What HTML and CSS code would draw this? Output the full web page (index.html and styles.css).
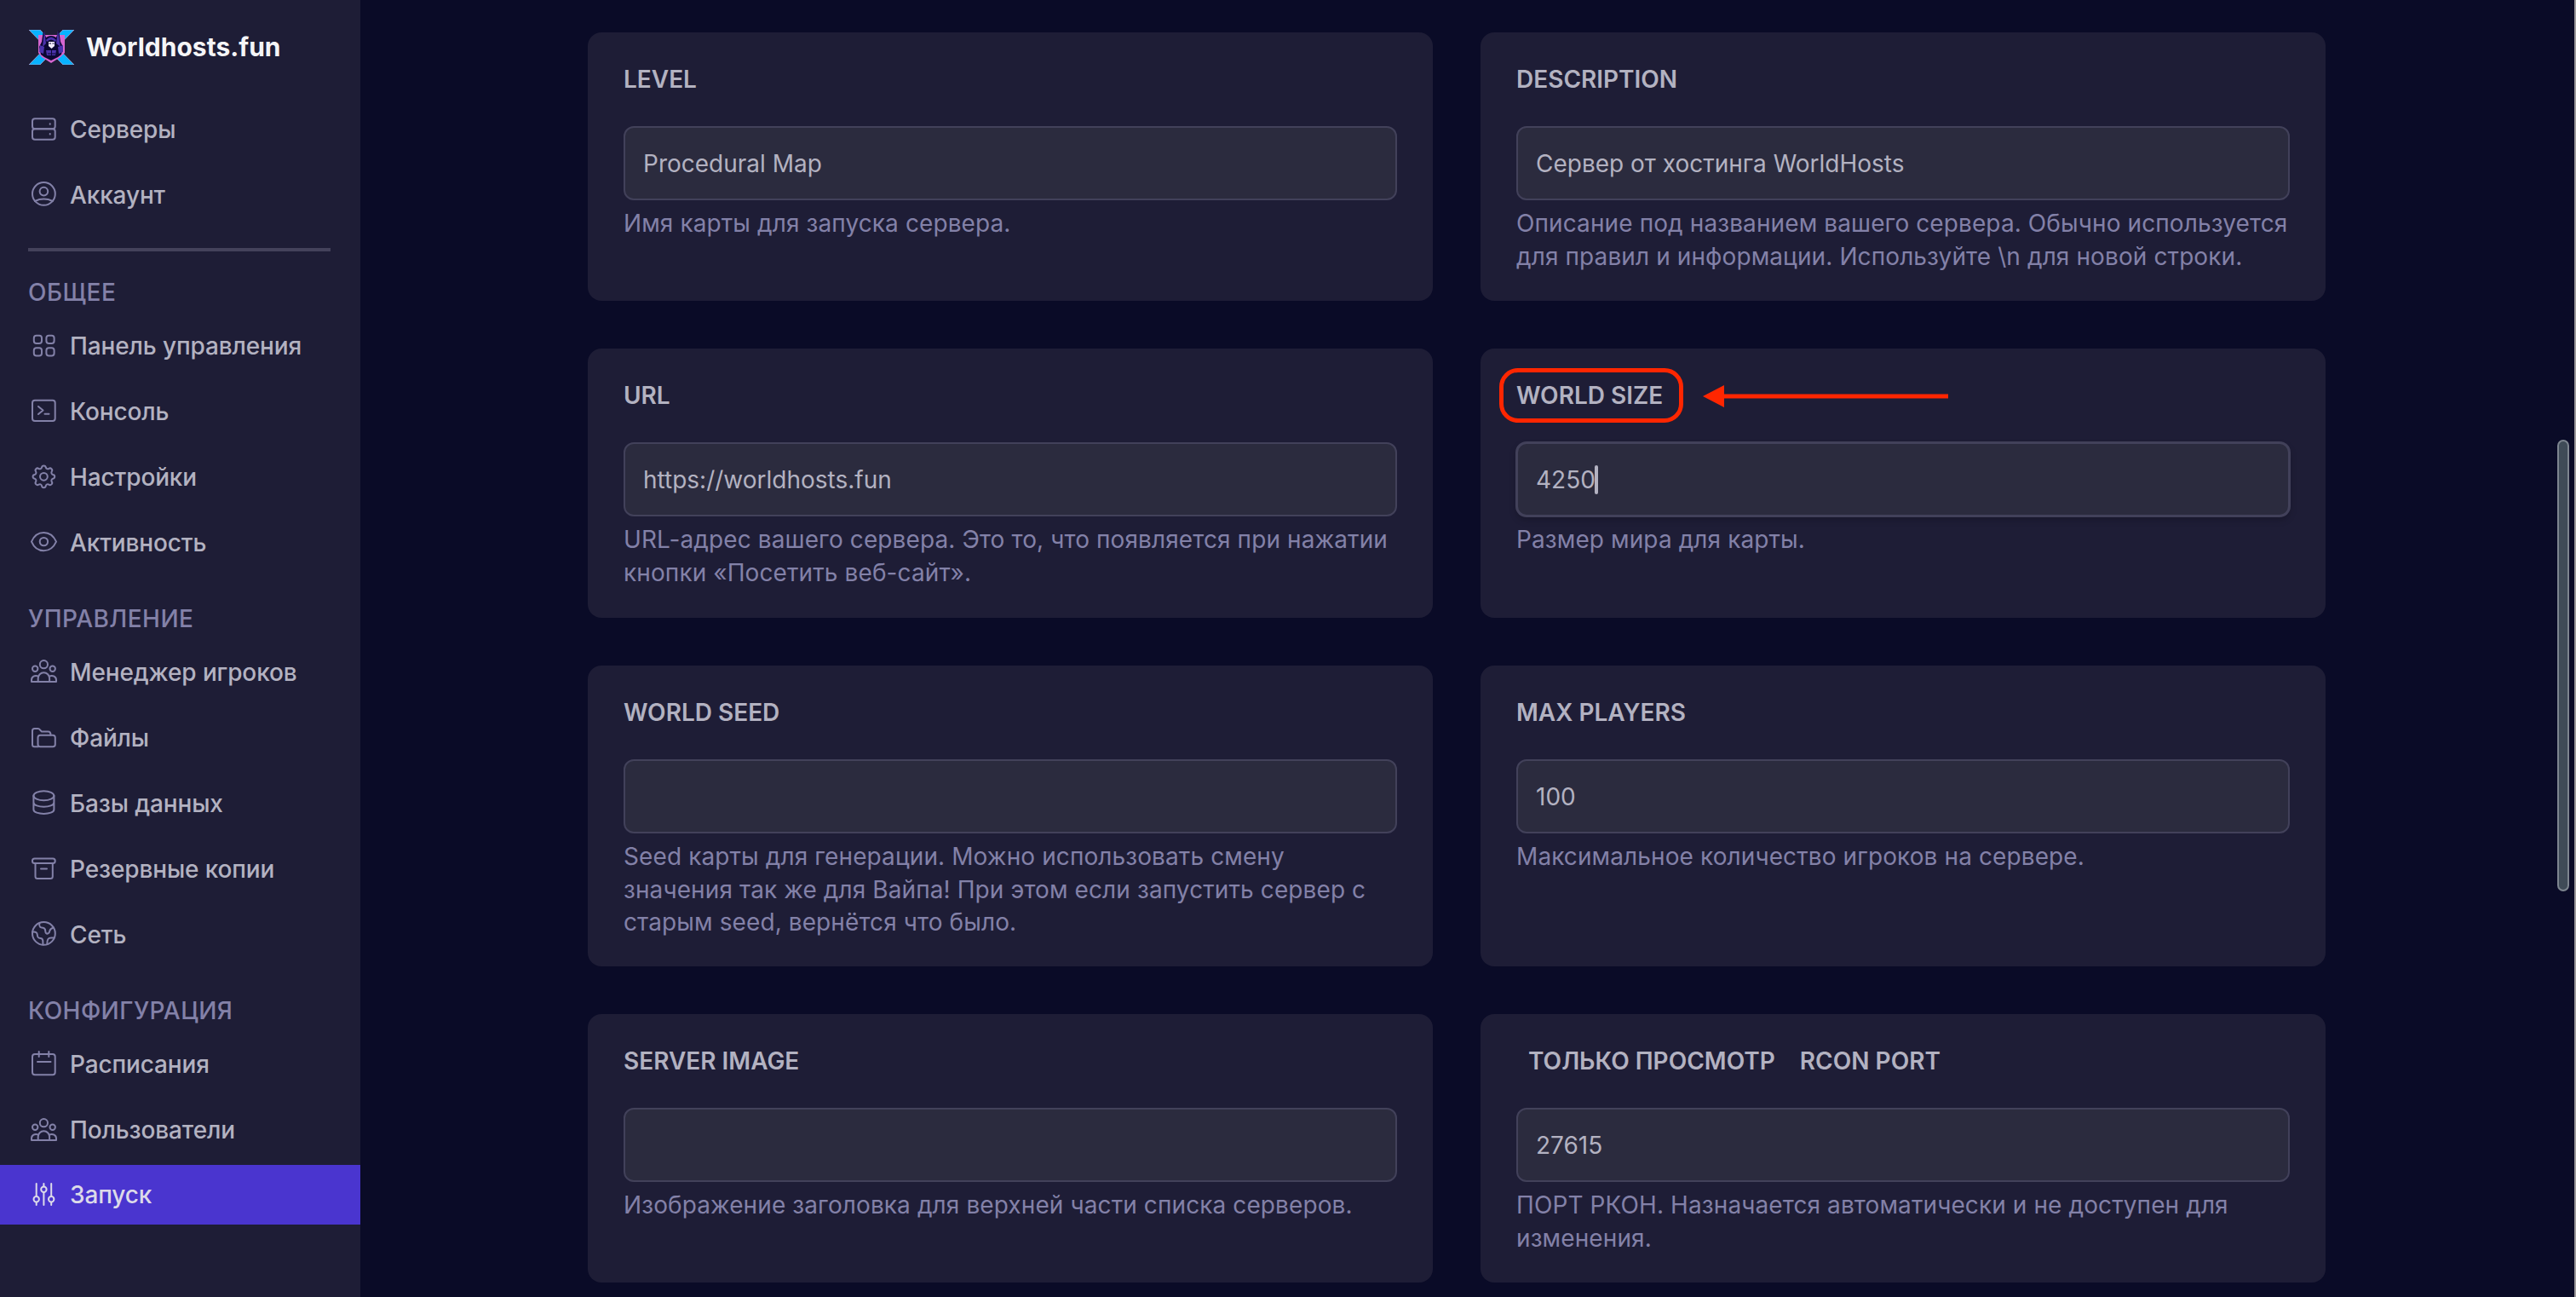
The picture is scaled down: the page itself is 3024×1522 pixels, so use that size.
FILE: index.html
```
<!DOCTYPE html>
<html lang="ru">
<head>
    <meta charset="utf-8">
    <title>Worldhosts.fun</title>
    <link rel="stylesheet" href="styles.css">
</head>
<body>
    <nav class="sidebar">
        <div class="brand">
            <svg class="logo" width="53" height="41" viewBox="0 0 53 41">
                <path d="M0 0H13L53 41H40Z" fill="#08b2ff" stroke="#b9a9d8" stroke-width=".7"/>
                <path d="M53 0H40L0 41H13Z" fill="#08b2ff" stroke="#b9a9d8" stroke-width=".7"/>
                <path d="M11 6H42V27L37 32L26 39L15 32L11 27Z" fill="#d566d0"/>
                <path d="M17 0L20 9Q26 5 32 9L35 0L37 14L40 20L38 29L34 32L26 36L18 32L14 29L12 20L15 14Z" fill="#0b0733"/>
                <path d="M18 1L20 16L16 20ZM34 1L32 16L37 20ZM13 18L18 20L17 28L12 26ZM40 18L34 20L35 28L40 26ZM20 12Q26 5 32 12L31 14Q26 9 21 14ZM20 24H32L31 30H21Z" fill="#4b32ac"/>
                <path d="M23 14H30V19L26.500 22L23 19Z" fill="#f3edff"/>
                <path d="M23.500 16H26M27.500 16H29.500M22 28H31M26.500 24V30" stroke="#0b0733" stroke-width="1"/>
            </svg>
            <span>Worldhosts.fun</span>
        </div>

        <div class="menu">
            <a class="item">
                <svg class="icon" viewBox="0 0 33 34"><rect x="3" y="4.300" width="26.700" height="12" rx="3"/><rect x="3" y="16.300" width="26.700" height="12.400" rx="3"/><path d="M23.700 10.200v.6M23.700 22v.6"/></svg>
                Серверы
            </a>
            <a class="item">
                <svg class="icon" viewBox="0 0 33 34"><circle cx="16.400" cy="15.400" r="13.400"/><circle cx="16.400" cy="12.600" r="4.800"/><path d="M6 24Q16.400 19.200 26.800 24"/></svg>
                Аккаунт
            </a>
        </div>

        <hr>

        <h3 class="first">Общее</h3>
        <div class="menu">
            <a class="item">
                <svg class="icon" viewBox="0 0 33 34"><rect x="4.800" y="4.800" width="9.200" height="9.200" rx="3"/><rect x="19.400" y="4.800" width="9.200" height="9.200" rx="3"/><rect x="4.800" y="19.200" width="9.200" height="9.200" rx="3"/><rect x="19.400" y="19.200" width="9.200" height="9.200" rx="3"/></svg>
                Панель управления
            </a>
            <a class="item">
                <svg class="icon" viewBox="0 0 33 34"><rect x="3" y="3.700" width="26.700" height="24.200" rx="3"/><path d="M10 11l5.500 4.500-5.500 4.500M17.500 19.700h5"/></svg>
                Консоль
            </a>
            <a class="item">
                <svg class="icon" viewBox="0 0 33 34"><g transform="translate(16.400 16.300)"><circle r="4.400"/><path d="M10.740-2.380A2.400 2.400 0 0 1 10.740 2.380A2.400 2.400 0 0 0 9.280 5.910A2.400 2.400 0 0 1 5.910 9.280A2.400 2.400 0 0 0 2.380 10.740A2.400 2.400 0 0 1-2.380 10.740A2.400 2.400 0 0 0-5.910 9.280A2.400 2.400 0 0 1-9.280 5.910A2.400 2.400 0 0 0-10.740 2.380A2.400 2.400 0 0 1-10.740-2.380A2.400 2.400 0 0 0-9.280-5.910A2.400 2.400 0 0 1-5.910-9.280A2.400 2.400 0 0 0-2.380-10.740A2.400 2.400 0 0 1 2.380-10.740A2.400 2.400 0 0 0 5.910-9.280A2.400 2.400 0 0 1 9.280-5.910A2.400 2.400 0 0 0 10.740-2.380Z"/></g></svg>
                Настройки
            </a>
            <a class="item">
                <svg class="icon" viewBox="0 0 33 34"><path d="M2 15.600C5 8.500 10 5 16.400 5S27.800 8.500 31 15.600C27.800 22.700 22.800 26.200 16.400 26.200S5 22.700 2 15.600Z"/><circle cx="16.400" cy="15.600" r="4.700"/></svg>
                Активность
            </a>
        </div>

        <h3>Управление</h3>
        <div class="menu">
            <a class="item">
                <svg class="icon" viewBox="0 0 33 34"><circle cx="16.400" cy="7.700" r="4.600"/><circle cx="6.200" cy="12.700" r="3.200"/><circle cx="26.700" cy="12.700" r="3.200"/><path d="M9.700 28V24a6.700 6.800 0 0 1 13.400 0V28M9.700 21.500C6 20 2 22 2 26V28H31V26C31 22 27 20 23.100 21.500"/></svg>
                Менеджер игроков
            </a>
            <a class="item">
                <svg class="icon" viewBox="0 0 33 34"><path d="M10 27.200H5.500Q3 27.200 3 24.700V8.500Q3 6 5.500 6H9.500Q11 6 12 7.500L14 9.600H21.500Q24.500 9.600 24.500 13.500"/><rect x="9.500" y="13.800" width="20.300" height="13.400" rx="2.800"/></svg>
                Файлы
            </a>
            <a class="item">
                <svg class="icon" viewBox="0 0 33 34"><ellipse cx="16.400" cy="7.700" rx="12" ry="5.500"/><path d="M4.400 7.700V24C4.400 30.500 28.400 30.500 28.400 24V7.700M4.400 15.500C4.400 22.500 28.400 22.500 28.400 15.500"/></svg>
                Базы данных
            </a>
            <a class="item">
                <svg class="icon" viewBox="0 0 33 34"><rect x="3" y="4.500" width="26.700" height="5.600" rx="2.600"/><path d="M6.500 10.100V25.500Q6.500 28 9 28H24.200Q26.800 28 26.800 25.500V10.100M13 16.400H20"/></svg>
                Резервные копии
            </a>
            <a class="item">
                <svg class="icon" viewBox="0 0 33 34"><circle cx="16.400" cy="15.400" r="13.400"/><path d="M11.300 3.500C10.500 8.500 13 8.500 15.500 8.700C19.500 9.300 17.500 13 18.800 14.700C20.500 16.500 22.800 15.500 23.300 12.500C24 9.500 25.500 9 28 8.500M3 13.700C7 13.200 8.700 14 8.800 17C9 21.500 11 20.800 13.500 21.200C16.200 21.800 15.200 24.500 15.400 28.500M20.300 28C20.300 22 21.500 20.500 25.500 20.600H28.500"/></svg>
                Сеть
            </a>
        </div>

        <h3>Конфигурация</h3>
        <div class="menu">
            <a class="item">
                <svg class="icon" viewBox="0 0 33 34"><rect x="3" y="5" width="26.700" height="24.200" rx="3"/><path d="M10.700 2v6M22.300 2v6M9 14H24.500"/></svg>
                Расписания
            </a>
            <a class="item">
                <svg class="icon" viewBox="0 0 33 34"><circle cx="16.400" cy="8.700" r="4.600"/><circle cx="6.200" cy="13.700" r="3.200"/><circle cx="26.700" cy="13.700" r="3.200"/><path d="M9.700 29V25a6.700 6.800 0 0 1 13.400 0V29M9.700 22.500C6 21 2 23 2 27V29H31V27C31 23 27 21 23.100 22.500"/></svg>
                Пользователи
            </a>
            <a class="item active">
                <svg class="icon" viewBox="0 0 33 34"><path d="M7.700 4V18.700M7.700 26V29M16.400 4V7.300M16.400 14V29M25.200 4V18.700M25.200 26V29"/><circle cx="7.700" cy="22.300" r="3.200"/><circle cx="16.400" cy="10.700" r="3.200"/><circle cx="25.200" cy="22.300" r="3.200"/></svg>
                Запуск
            </a>
        </div>
    </nav>

    <main class="content">
        <div class="cards">
            <div class="card">
                <h2>Level</h2>
                <div class="field">Procedural Map</div>
                <p>Имя карты для запуска сервера.</p>
            </div>
            <div class="card">
                <h2>Description</h2>
                <div class="field">Сервер от хостинга WorldHosts</div>
                <p>Описание под названием вашего сервера. Обычно используется<br>для правил и информации. Используйте \n для новой строки.</p>
            </div>
            <div class="card">
                <h2>Url</h2>
                <div class="field">https://worldhosts.fun</div>
                <p>URL-адрес вашего сервера. Это то, что появляется при нажатии<br>кнопки «Посетить веб-сайт».</p>
            </div>
            <div class="card">
                <h2><span class="marked">World size
                    <svg class="arrow" width="288" height="26" viewBox="0 0 288 26"><path d="M0 13L25 0V10.500H288V15.500H25V26Z"/></svg>
                </span></h2>
                <div class="field focused">4250<span class="caret"></span></div>
                <p>Размер мира для карты.</p>
            </div>
            <div class="card">
                <h2>World seed</h2>
                <div class="field"></div>
                <p>Seed карты для генерации. Можно использовать смену<br>значения так же для Вайпа! При этом если запустить сервер с<br>старым seed, вернётся что было.</p>
            </div>
            <div class="card">
                <h2>Max players</h2>
                <div class="field">100</div>
                <p>Максимальное количество игроков на сервере.</p>
            </div>
            <div class="card">
                <h2>Server image</h2>
                <div class="field"></div>
                <p>Изображение заголовка для верхней части списка серверов.</p>
            </div>
            <div class="card">
                <h2><span class="badge">Только просмотр</span>Rcon port</h2>
                <div class="field">27615</div>
                <p>ПОРТ РКОН. Назначается автоматически и не доступен для<br>изменения.</p>
            </div>
        </div>
    </main>

    <div class="scrollbar"></div>
</body>
</html>
```

FILE: styles.css
```
*, *::before {
    box-sizing: border-box;
}
body {
    margin: 0;
    display: flex;
    height: 1522px;
    overflow: hidden;
    background-color: #0a0b27;
    border-right: 2px solid #9c9a9c;
    color: #b3b2c1;
    font-family: Inter, "Noto Sans", sans-serif;
    font-size: 28px;
}
/* sidebar */
.sidebar {
    width: 423px;
    flex-shrink: 0;
    background-color: #1e1d36;
}
.brand {
    display: flex;
    align-items: center;
    gap: 14px;
    height: 117px;
    padding: 0 0 7px 34px;
    color: #f5f5f7;
    font-size: 30px;
    font-weight: 700;
}
.menu {
    display: flex;
    flex-direction: column;
    gap: 7px;
}
.item {
    display: flex;
    align-items: center;
    gap: 14px;
    height: 70px;
    padding-left: 35px;
    font-weight: 500;
    letter-spacing: -0.13px;
    white-space: nowrap;
}
.item.active {
    margin-top: -1px;
    background-color: #4a35cf;
    color: #dcdae9;
}
.icon {
    width: 33px;
    height: 34px;
    fill: none;
    stroke: #8381a8;
    stroke-width: 2;
    stroke-linecap: round;
    stroke-linejoin: round;
}
.active .icon {
    stroke: #dcdae9;
}
hr {
    width: 355px;
    height: 4px;
    margin: 27px 0 0 33px;
    border: none;
    background-color: #44425b;
}
h3 {
    height: 82px;
    margin: 0;
    padding: 37px 0 0 33px;
    color: #8381a8;
    font-size: 28px;
    font-weight: 500;
    line-height: 34px;
    letter-spacing: 0.45px;
    text-transform: uppercase;
}
h3.first {
    height: 76px;
    padding-top: 31px;
}
/* startup variables */
.content {
    flex: 1;
    padding: 38px 0 0 267px;
}
.cards {
    display: grid;
    grid-template-columns: 992px 992px;
    grid-template-rows: 315px 316px 353px 315px;
    gap: 56px;
}
.card {
    padding: 38px 42px 0;
    border-radius: 16px;
    background-color: #1e1d36;
}
h2 {
    height: 34px;
    margin: 0 0 38px;
    font-size: 28px;
    font-weight: 600;
    line-height: 34px;
    text-transform: uppercase;
}
.field {
    display: flex;
    align-items: center;
    height: 87px;
    padding: 0 21px;
    border: 2px solid #42415a;
    border-radius: 12px;
    background-color: #2b2b3e;
}
.field.focused {
    box-shadow: 0 0 0 1px #42415a, 0 4px 8px rgba(0, 0, 0, 0.2);
}
.caret {
    width: 4px;
    height: 34px;
    margin-left: -1px;
    border-radius: 2px;
    background-color: #b3b2c1;
}
p {
    margin: 8px 0 0;
    color: #8381a8;
    letter-spacing: 0.1px;
    line-height: 38.5px;
    white-space: nowrap;
}
.badge {
    margin: 0 29px 0 14px;
}
/* red frame with an arrow around the label */
.marked {
    position: relative;
}
.marked::before {
    content: "";
    position: absolute;
    left: -20px;
    top: -15px;
    width: 216px;
    height: 64px;
    border: 5px solid #ff2600;
    border-radius: 22px;
}
.arrow {
    position: absolute;
    left: 219px;
    top: 5px;
    fill: #ff2600;
}
.scrollbar {
    position: absolute;
    left: 3002px;
    top: 516px;
    width: 14px;
    height: 530px;
    border: 2px solid #7d858f;
    border-radius: 7px;
    background-color: #3f4b57;
}
```
